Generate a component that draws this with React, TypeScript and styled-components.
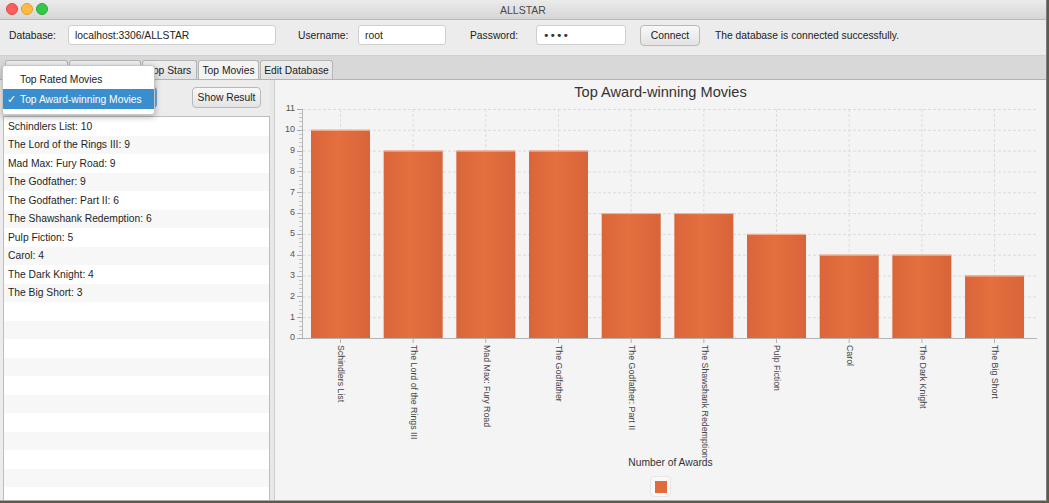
import React from "react";
import styled, { createGlobalStyle } from "styled-components";

const GlobalStyle = createGlobalStyle`
  html, body { margin: 0; padding: 0; background: #5d5a46; }
  body { font-family: "Liberation Sans", Arial, Helvetica, sans-serif; }
  #root { width: 1049px; height: 503px; overflow: hidden; }
`;

const movies: { title: string; awards: number }[] = [
  { title: "Schindlers List", awards: 10 },
  { title: "The Lord of the Rings III", awards: 9 },
  { title: "Mad Max: Fury Road", awards: 9 },
  { title: "The Godfather", awards: 9 },
  { title: "The Godfather: Part II", awards: 6 },
  { title: "The Shawshank Redemption", awards: 6 },
  { title: "Pulp Fiction", awards: 5 },
  { title: "Carol", awards: 4 },
  { title: "The Dark Knight", awards: 4 },
  { title: "The Big Short", awards: 3 },
];

const UI_FONT = "10.3px";

const Window = styled.div`
  position: relative;
  width: 1047px;
  height: 501px;
  box-sizing: border-box;
  background: #ececec;
  border-right: 1px solid #7d7d7d;
  border-bottom: 1px solid #a9a9a9;
  display: flex;
  flex-direction: column;
  overflow: hidden;
`;

const TitleBar = styled.div`
  position: relative;
  height: 19px;
  flex: none;
  background: linear-gradient(#ebebeb, #d6d6d6);
  border-bottom: 1px solid #b9b9b9;
  display: flex;
  align-items: center;
  justify-content: center;
  font-size: 10.5px;
  color: #4a4a4a;
`;

const Lights = styled.div`
  position: absolute;
  left: 6px;
  top: 3px;
  display: flex;
  gap: 3px;
`;

const Light = styled.span<{ $c: string; $b: string }>`
  width: 12px;
  height: 12px;
  border-radius: 50%;
  box-sizing: border-box;
  background: ${(p) => p.$c};
  border: 1px solid ${(p) => p.$b};
`;

const Toolbar = styled.div`
  height: 35px;
  flex: none;
  box-sizing: border-box;
  padding: 0 0 5px 9px;
  display: flex;
  align-items: center;
  font-size: ${UI_FONT};
  color: #222;
`;

const Label = styled.span<{ $w: number; $ml?: number }>`
  width: ${(p) => p.$w}px;
  margin-left: ${(p) => p.$ml ?? 0}px;
  flex: none;
`;

const Input = styled.div<{ $w: number }>`
  width: ${(p) => p.$w}px;
  height: 20px;
  box-sizing: border-box;
  flex: none;
  background: #fff;
  border: 1px solid #cfcfcf;
  border-radius: 3px;
  padding-left: 6px;
  display: flex;
  align-items: center;
  font-size: ${UI_FONT};
  color: #222;
`;

const Dots = styled.span`
  font-size: 11px;
  letter-spacing: 0px;
  font-family: "DejaVu Sans", sans-serif;
  color: #333;
`;

const Button = styled.div<{ $w: number; $ml?: number }>`
  width: ${(p) => p.$w}px;
  margin-left: ${(p) => p.$ml ?? 0}px;
  height: 21px;
  box-sizing: border-box;
  flex: none;
  display: flex;
  align-items: center;
  justify-content: center;
  background: linear-gradient(#f8f8f8, #e3e3e3);
  border: 1px solid #b9b9b9;
  border-radius: 4px;
  font-size: ${UI_FONT};
  color: #222;
`;

const Message = styled.span`
  margin-left: 15px;
`;

const TabHeader = styled.div`
  height: 25px;
  flex: none;
  box-sizing: border-box;
  background: #d8d8d8;
  border-top: 1px solid #d0d0d0;
  border-bottom: 1px solid #b3b3b3;
  display: flex;
  align-items: flex-end;
  padding-left: 5px;
  gap: 1px;
`;

const Tab = styled.div<{ $w: number; $active?: boolean }>`
  width: ${(p) => p.$w}px;
  height: 19px;
  box-sizing: border-box;
  border: 1px solid #b5b5b5;
  border-bottom: none;
  border-radius: 3px 3px 0 0;
  background: ${(p) => (p.$active ? "#f4f4f4" : "linear-gradient(#eeeeee, #e2e2e2)")};
  font-size: ${UI_FONT};
  color: #222;
  display: flex;
  align-items: center;
  justify-content: center;
  white-space: nowrap;
  overflow: hidden;
`;

const Body = styled.div`
  flex: 1;
  display: flex;
  min-height: 0;
`;

const LeftPane = styled.div`
  width: 270px;
  flex: none;
  display: flex;
  flex-direction: column;
  padding-top: 7px;
  box-sizing: border-box;
`;

const Controls = styled.div`
  display: flex;
  height: 21px;
  flex: none;
`;

const Combo = styled.div`
  margin-left: 8px;
  width: 149px;
  height: 21px;
  box-sizing: border-box;
  border: 2px solid #6aa6dc;
  border-radius: 4px;
  background: #f6f6f6;
`;

const List = styled.div`
  margin: 8px 0 0 3px;
  width: 267px;
  flex: 1;
  box-sizing: border-box;
  background: #fff;
  border: 1px solid #bdbdbd;
  border-bottom: none;
  overflow: hidden;
`;

const Row = styled.div<{ $odd: boolean }>`
  height: 18.5px;
  display: flex;
  align-items: center;
  padding-left: 4px;
  font-size: ${UI_FONT};
  color: #1e1e1e;
  background: ${(p) => (p.$odd ? "#f7f7f7" : "#ffffff")};
`;

const Divider = styled.div`
  width: 5px;
  flex: none;
  box-sizing: border-box;
  background: #e8e8e8;
  border-right: 1px solid #cfcfcf;
`;

const ChartPane = styled.div`
  flex: 1;
  background: #f4f4f4;
  display: flex;
  flex-direction: column;
  align-items: center;
`;

const ChartTitle = styled.div`
  height: 24px;
  line-height: 24px;
  font-size: 14.6px;
  color: #333;
  flex: none;
`;

const PlotSvg = styled.svg`
  display: block;
  flex: none;
  overflow: visible;
`;

const AxisLabel = styled.div`
  height: 16px;
  line-height: 16px;
  font-size: ${UI_FONT};
  color: #333;
  padding-left: 20px;
  flex: none;
`;

const Legend = styled.div`
  margin-top: 5px;
  width: 21px;
  height: 21px;
  box-sizing: border-box;
  border: 1px solid #e6e6e6;
  border-radius: 4px;
  background: #f8f8f8;
  display: flex;
  align-items: center;
  justify-content: center;
`;

const Swatch = styled.div`
  width: 12px;
  height: 12px;
  background: #e26b3c;
`;

const Popup = styled.div`
  position: absolute;
  left: 2px;
  top: 65px;
  width: 153px;
  box-sizing: border-box;
  padding: 3px 0 5px;
  background: #fff;
  border: 1px solid #c6c6c6;
  border-radius: 3px;
  box-shadow: 0 2px 6px rgba(0, 0, 0, 0.28);
  z-index: 5;
`;

const PopupItem = styled.div<{ $sel?: boolean }>`
  position: relative;
  height: 20px;
  display: flex;
  align-items: center;
  padding-left: 17px;
  font-size: ${UI_FONT};
  color: ${(p) => (p.$sel ? "#fff" : "#222")};
  background: ${(p) => (p.$sel ? "#3a8ecd" : "transparent")};
  white-space: nowrap;
`;

const Check = styled.span`
  position: absolute;
  left: 4px;
  font-family: "DejaVu Sans", sans-serif;
  font-size: 11px;
`;

const PLOT_W = 771;
const PLOT_H = 351;
const AXIS_X = 27;
const RIGHT_X = 762;
const ZERO_Y = 234;
const UNIT = 20.82;
const C0 = 65.5;
const STEP = 72.67;
const BAR_W = 59;

function Chart() {
  const yv = (v: number) => ZERO_Y - v * UNIT;
  const majors = Array.from({ length: 12 }, (_, i) => i);
  const minors: number[] = [];
  for (let i = 0; i < 11; i++) for (let k = 1; k < 5; k++) minors.push(i + k / 5);
  return (
    <PlotSvg width={PLOT_W} height={PLOT_H} viewBox={`0 0 ${PLOT_W} ${PLOT_H}`}>
      <defs>
        <linearGradient id="barFill" x1="0" x2="1" y1="0" y2="0">
          <stop offset="0" stopColor="#d9653a" />
          <stop offset="0.45" stopColor="#e4703f" />
          <stop offset="1" stopColor="#d8643a" />
        </linearGradient>
      </defs>
      {majors.slice(1).map((v) => (
        <line key={"g" + v} x1={AXIS_X + 1} x2={RIGHT_X} y1={yv(v) + 0.5} y2={yv(v) + 0.5} stroke="#dcdcdc" strokeDasharray="3 2" />
      ))}
      {movies.map((m, i) => (
        <line key={"vg" + i} x1={C0 + i * STEP} x2={C0 + i * STEP} y1={yv(11)} y2={ZERO_Y} stroke="#dcdcdc" strokeDasharray="3 2" />
      ))}
      {movies.map((m, i) => {
        const cx = C0 + i * STEP;
        const top = yv(m.awards);
        return (
          <g key={"b" + i}>
            <rect x={cx - BAR_W / 2} y={top} width={BAR_W} height={ZERO_Y - top} fill="url(#barFill)" />
            <line x1={cx - BAR_W / 2} x2={cx + BAR_W / 2} y1={top + 0.5} y2={top + 0.5} stroke="#f3b79d" strokeWidth={1} />
          </g>
        );
      })}
      <line x1={AXIS_X + 0.5} x2={AXIS_X + 0.5} y1={yv(11)} y2={ZERO_Y} stroke="#b4b4b4" />
      <line x1={AXIS_X} x2={RIGHT_X} y1={ZERO_Y + 0.5} y2={ZERO_Y + 0.5} stroke="#b4b4b4" />
      {minors.map((v, i) => (
        <line key={"mn" + i} x1={AXIS_X - 3} x2={AXIS_X} y1={Math.round(yv(v)) + 0.5} y2={Math.round(yv(v)) + 0.5} stroke="#c4c4c4" />
      ))}
      {majors.map((v) => (
        <g key={"mj" + v}>
          <line x1={AXIS_X - 5} x2={AXIS_X} y1={Math.round(yv(v)) + 0.5} y2={Math.round(yv(v)) + 0.5} stroke="#a8a8a8" />
          <text x={AXIS_X - 7} y={yv(v)} textAnchor="end" dominantBaseline="middle" fontSize="9" fill="#555" fontFamily="Liberation Sans, Arial, sans-serif">
            {v}
          </text>
        </g>
      ))}
      {movies.map((m, i) => {
        const cx = C0 + i * STEP;
        return (
          <g key={"xl" + i}>
            <line x1={cx} x2={cx} y1={ZERO_Y} y2={ZERO_Y + 5} stroke="#b4b4b4" />
            <text transform={`translate(${cx} ${ZERO_Y + 7}) rotate(90)`} dominantBaseline="middle" fontSize="8.8" fill="#444" fontFamily="Liberation Sans, Arial, sans-serif">
              {m.title}
            </text>
          </g>
        );
      })}
    </PlotSvg>
  );
}

export default function App() {
  const rows = Array.from({ length: 22 }, (_, i) => movies[i]);
  return (
    <>
      <GlobalStyle />
      <Window>
        <TitleBar>
          <Lights>
            <Light $c="#fc605c" $b="#de4841" />
            <Light $c="#fdbc40" $b="#de9f34" />
            <Light $c="#34c84a" $b="#27aa35" />
          </Lights>
          ALLSTAR
        </TitleBar>
        <Toolbar>
          <Label $w={59}>Database:</Label>
          <Input $w={208}>localhost:3306/ALLSTAR</Input>
          <Label $w={60} $ml={22}>Username:</Label>
          <Input $w={88}>root</Input>
          <Label $w={66} $ml={24}>Password:</Label>
          <Input $w={90}>
            <Dots>••••</Dots>
          </Input>
          <Button $w={60} $ml={14}>Connect</Button>
          <Message>The database is connected successfully.</Message>
        </Toolbar>
        <TabHeader>
          <Tab $w={63}>Search</Tab>
          <Tab $w={72}>Top Directors</Tab>
          <Tab $w={55}>Top Stars</Tab>
          <Tab $w={61} $active>Top Movies</Tab>
          <Tab $w={73}>Edit Database</Tab>
        </TabHeader>
        <Body>
          <LeftPane>
            <Controls>
              <Combo />
              <Button $w={69} $ml={35}>Show Result</Button>
            </Controls>
            <List>
              {rows.map((m, i) => (
                <Row key={i} $odd={i % 2 === 1}>
                  {m ? `${m.title}: ${m.awards}` : ""}
                </Row>
              ))}
            </List>
          </LeftPane>
          <Divider />
          <ChartPane>
            <ChartTitle>Top Award-winning Movies</ChartTitle>
            <Chart />
            <AxisLabel>Number of Awards</AxisLabel>
            <Legend>
              <Swatch />
            </Legend>
          </ChartPane>
        </Body>
        <Popup>
          <PopupItem>Top Rated Movies</PopupItem>
          <PopupItem $sel>
            <Check>✓</Check>
            Top Award-winning Movies
          </PopupItem>
        </Popup>
      </Window>
    </>
  );
}
